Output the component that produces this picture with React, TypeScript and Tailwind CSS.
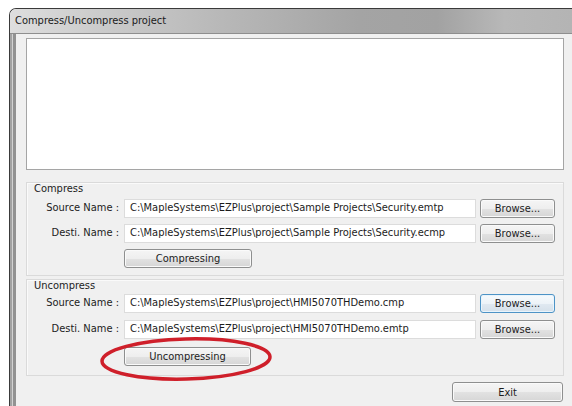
import React from "react";

const font = { fontFamily: '"DejaVu Sans Condensed", "Liberation Sans", sans-serif' };

const btnBase =
  "flex items-center justify-center rounded-[3px] border text-[#1c1c1c] text-[11px] leading-none";
const btnNormal =
  "border-[#8e8f8f] bg-[linear-gradient(to_bottom,#f5f5f5_0%,#eeeeee_50%,#e2e2e2_51%,#d6d6d6_100%)] shadow-[inset_0_0_0_1px_#fafafa]";
const btnFocused =
  "border-[#4d93c6] bg-[linear-gradient(to_bottom,#f6fafd_0%,#edf3f8_50%,#e0e9f1_51%,#d5e0ea_100%)] shadow-[inset_0_0_0_1px_#e8f4fc]";

function Button({
  children,
  className = "",
  focused = false,
}: {
  children: React.ReactNode;
  className?: string;
  focused?: boolean;
}) {
  return (
    <div className={`${btnBase} ${focused ? btnFocused : btnNormal} ${className}`}>{children}</div>
  );
}

function PathRow({ label, value, focused = false }: { label: string; value: string; focused?: boolean }) {
  return (
    <div className="flex h-[19px] items-center">
      <div className="w-[93px] pr-[1px] text-right text-[11px] text-[#1c1c1c] whitespace-nowrap">{label}</div>
      <div className="ml-[4px] flex h-[19px] w-[352px] items-center border border-[#dcdcdc] bg-white pl-[5px] text-[11px] text-[#1c1c1c] whitespace-nowrap overflow-hidden">
        {value}
      </div>
      <Button className="ml-[4px] h-[19px] w-[75px]" focused={focused}>
        Browse...
      </Button>
    </div>
  );
}

function Group({
  title,
  children,
  className = "",
  titleClass = "h-[14px]",
}: {
  title: string;
  children: React.ReactNode;
  className?: string;
  titleClass?: string;
}) {
  return (
    <div className={`flex flex-col border border-[#dadada] shadow-[inset_1px_1px_0_#fafafa] ${className}`}>
      <div className={`shrink-0 pl-[7px] text-[11px] leading-[12px] text-[#1c1c1c] ${titleClass}`}>{title}</div>
      {children}
    </div>
  );
}

export default function App() {
  return (
    <div className="relative h-[406px] w-[572px] overflow-hidden bg-white pl-[9px] pt-[8px]" style={font}>
      <div className="flex h-full flex-col overflow-hidden rounded-tl-[7px] border-l border-t border-[#3a3a3a]">
        {/* caption bar */}
        <div className="flex h-[25px] shrink-0 items-center bg-[linear-gradient(to_right,#dedede_0%,#cccccc_15%,#b6b6b6_40%,#a4a4a4_62%,#a2a2a2_76%,#b8b8b8_88%,#b4b4b4_100%)] pl-[5px] text-[11px] text-[#1a1a1a] shadow-[inset_0_-1px_0_#8e8e8e]">
          Compress/Uncompress project
        </div>
        <div className="flex flex-1">
          {/* left window frame */}
          <div className="flex w-[6px] shrink-0">
            <div className="w-[2px] bg-[#a2a2a2]" />
            <div className="w-[1px] bg-[#d2d2d2]" />
            <div className="w-[3px] bg-[#929292]" />
          </div>
          {/* client area */}
          <div className="flex flex-1 flex-col bg-[#f0f0f0] pl-[10px] pr-[8px] pt-[4px]">
            <div className="h-[132px] shrink-0 border border-[#a5a5a5] bg-white" />

            <Group title="Compress" className="mt-[12px] h-[94px]" titleClass="h-[16px]">
              <div className="flex flex-col gap-[6px]">
                <PathRow
                  label="Source Name :"
                  value="C:\MapleSystems\EZPlus\project\Sample Projects\Security.emtp"
                />
                <PathRow
                  label="Desti. Name :"
                  value="C:\MapleSystems\EZPlus\project\Sample Projects\Security.ecmp"
                />
              </div>
              <Button className="ml-[97px] mt-[6px] h-[19px] w-[128px]">Compressing</Button>
            </Group>

            <Group title="Uncompress" className="mt-[3px] h-[97px]">
              <div className="flex flex-col gap-[7px]">
                <PathRow
                  label="Source Name :"
                  value="C:\MapleSystems\EZPlus\project\HMI5070THDemo.cmp"
                  focused
                />
                <PathRow
                  label="Desti. Name :"
                  value="C:\MapleSystems\EZPlus\project\HMI5070THDemo.emtp"
                />
              </div>
              <Button className="ml-[97px] mt-[8px] h-[19px] w-[127px]">Uncompressing</Button>
            </Group>

            <div className="mt-[6px] flex justify-end pr-[1px]">
              <Button className="h-[20px] w-[111px]">Exit</Button>
            </div>
          </div>
        </div>
      </div>

      {/* red marker ring drawn over the Uncompressing button */}
      <svg className="pointer-events-none absolute left-0 top-0" width="572" height="406">
        <ellipse
          cx="186"
          cy="359"
          rx="84"
          ry="20"
          fill="none"
          stroke="#cf1f2a"
          strokeWidth="3.5"
          transform="rotate(-1.5 186 359)"
        />
      </svg>
    </div>
  );
}
